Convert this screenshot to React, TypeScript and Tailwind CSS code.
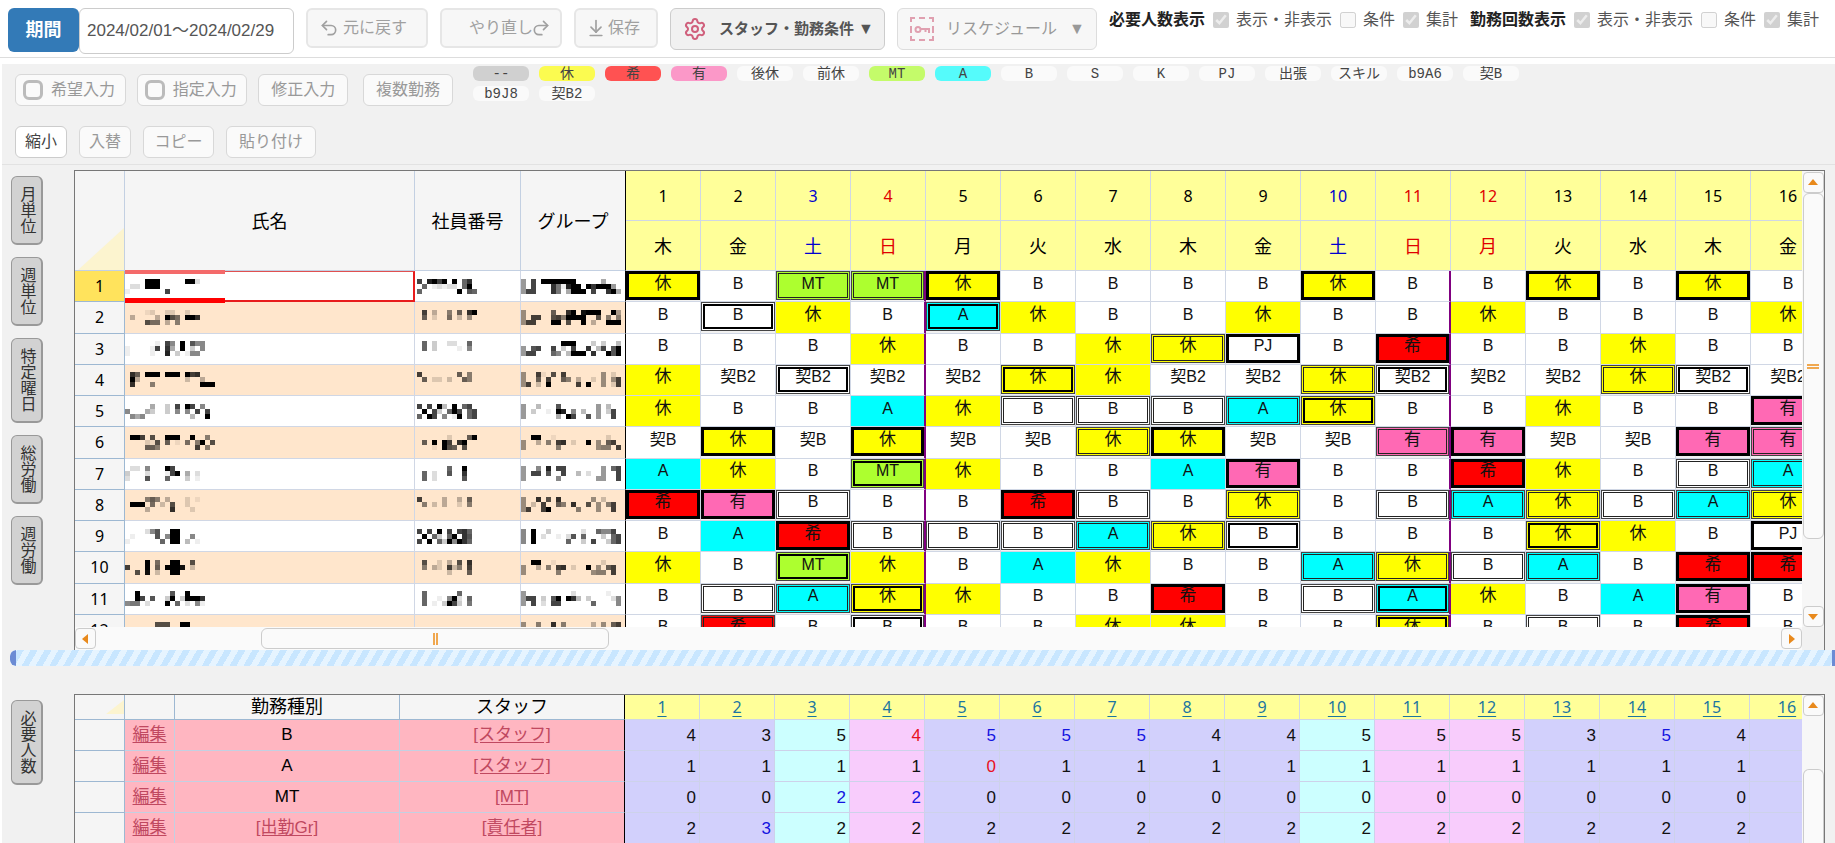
import React from 'react';
import clsx from 'clsx';
import { ArrowDownToLine, Redo2, Settings, Undo2 } from 'lucide-react';

const uiFont = "font-['Liberation_Sans','Noto_Sans_CJK_JP',sans-serif]";
const gridFont = "font-['Noto_Sans','Noto_Sans_CJK_JP',sans-serif]";
const chipFont = "font-['Liberation_Mono','Noto_Sans_CJK_JP',monospace]";

const weekdays = ['木', '金', '土', '日', '月', '火', '水', '木', '金', '土', '日', '月', '火', '水', '木', '金'];
const saturdays = [3, 10];
const holidays = [4, 11, 12];
const days = weekdays.map((weekday, i) => ({ day: i + 1, weekday }));

const chips = [
  { label: '--', bg: 'bg-[#d0d0d0]' },
  { label: '休', bg: 'bg-[#fbfb50]' },
  { label: '希', bg: 'bg-[#ff5252]' },
  { label: '有', bg: 'bg-[#fb98c8]' },
  { label: '後休', bg: 'bg-[#fafafa]' },
  { label: '前休', bg: 'bg-[#fafafa]' },
  { label: 'MT', bg: 'bg-[#c4fb6a]' },
  { label: 'A', bg: 'bg-[#55fbfb]' },
  { label: 'B', bg: 'bg-[#fafafa]' },
  { label: 'S', bg: 'bg-[#fafafa]' },
  { label: 'K', bg: 'bg-[#fafafa]' },
  { label: 'PJ', bg: 'bg-[#fafafa]' },
  { label: '出張', bg: 'bg-[#fafafa]' },
  { label: 'スキル', bg: 'bg-[#fafafa]' },
  { label: 'b9A6', bg: 'bg-[#fafafa]' },
  { label: '契B', bg: 'bg-[#fafafa]' },
  { label: 'b9J8', bg: 'bg-[#fafafa]' },
  { label: '契B2', bg: 'bg-[#fafafa]' },
];

const shiftColors: Record<string, string> = {
  休: 'bg-[#ffff00]',
  希: 'bg-[#ff0000]',
  有: 'bg-[#ff69b4]',
  MT: 'bg-[#adff2f]',
  A: 'bg-[#00ffff]',
};

// Suffix: "!" thick frame, "=" double frame, "#" double frame with a heavy inner line
const shifts = [
  '休! B MT= MT= 休! B B B B 休! B B 休! B 休! B',
  'B B# 休 B A# 休 B B 休 B B 休 B B B 休',
  'B B B 休 B B 休 休= PJ! B 希! B B 休 B B',
  '休 契B2 契B2# 契B2 契B2 休# 休 契B2 契B2 休= 契B2# 契B2 契B2 休= 契B2# 契B2',
  '休 B B A 休 B= B= B= A= 休# B B 休 B B 有!',
  '契B 休! 契B 休! 契B 契B 休= 休! 契B 契B 有= 有! 契B 契B 有! 有=',
  'A 休 B MT# 休 B B A 有! B B 希! 休 B B= A=',
  '希! 有! B= B B 希! B= B 休= B B= A= 休= B= A= 休=',
  'B A 希! B= B= B= A= 休= B# B B B 休# 休 B PJ!',
  '休 B MT# 休 B A 休 B B A= 休= B= A= B 希! 希!',
  'B B= A= 休# 休 B B 希! B B= A# 休 B A 有! B',
  'B 希= B B# B B 休 休 B B 休# B B= B 希! B',
].map((row) => row.split(' '));

// Masked personal data: one hex digit per tile, 0 = darkest
const masks = [
  {
    name: ['....000.....00d', '.dd.000', 'e.......4'],
    id: ['4.2040.0.63', '.6.ededd.60', '6.......0.56'],
    group: ['9.4.0000000.....a...0', '9.4...37e200.030009.4', '944...37.a000.4..30a4'],
  },
  {
    name: ['....ed..dd..d', '.b....b.057.003', '....577.b.8'],
    id: ['.4.b..8.6.30', '.6.d..7.c.9', ''],
    group: ['9.....6..30.1000..0a4', '9.44..5480000..5.8.84', '944...00.5..0.b..0004'],
  },
  {
    name: ['......e.48.0.588', 'e....e4.3a.0.c.8', 'e....e..2.c.e88'],
    id: ['.6.c..dd..6', '.6.c....e.8', ''],
    group: ['........000...c.c..b4', '9.54..4.c.4..3.b4.504', '944...68.b000.3..0504'],
  },
  {
    name: ['.36.000.000.043', '.0b.........c..b', '.3...8.........000'],
    id: ['4.......6.8', '.6.dd.c..68', ''],
    group: ['9..4e.5.4.......9.d', '9..6.4..68.b..d.9.94', '94.c.0.....4.0..9.d4'],
  },
  {
    name: ['.....a..c.4.04.8', '8...ac..c.8.8.4.4', '.8a8.........b..0'],
    id: ['4.4.0b.0.64', '.0.4c.604.64', '6.04.8.e0.64'],
    group: ['9..b...5.......9.b', '9.c..e.02.8.b..9.c4', '9......a.04..5.9..4'],
  },
  {
    name: ['.004.5..000..0..8', '....de5.6.e.7.80.5', '....668.......4.8'],
    id: ['......d...60', '.6.0.04.30', '...e.056.5'],
    group: ['..00..e..........d', '9..b.8.43.d..0.9.64', '9......8.......988.4'],
  },
  {
    name: ['.dd.8...04', 'c...d...e40.a.d', 'd...5...6...c.e'],
    id: ['......6..0', '.6.d..5..3', '.6.d.....5'],
    group: ['9..8.2.44.......9.64', '9.44.5..4..b.d..9..4', '9......8.......99..4'],
  },
  {
    name: ['....868.b...d.e', '.000.7.c.5..d', '....b....3...d'],
    id: ['4....b..b.6', '.8.c.b..d.8', ''],
    group: ['9..3.5.3......9.c', '9.c.4..68.3..5.9.84', '94..40.....8...9..4'],
  },
  {
    name: ['....d85..00', '.e....5.800..8', 'e......6.00.b.e'],
    id: ['4.4.0.4.436', '.0.6c.60.35', '4.0.6c08036'],
    group: ['8.0..c......d..6884', '8.0.d..e.d5.6...c.64', '8.0......6..c.4..c64'],
  },
  {
    name: ['....0.7..00..5', '4...0.6.0001.c', '..5.1.c..00'],
    id: ['.5..d.b.5.3', '.8.bd.4c8.4', '......c...6'],
    group: ['..00..e.........d', '9..b.8.43.d..0.9.64', '9......8......988.4'],
  },
  {
    name: ['..0......5..0', '..04.5..c0.c0003', '877.d...0.6.d.8e'],
    id: ['.6......6', '.6..e.80d.6', '.6.e.c04c.7'],
    group: ['9.........d......e..4', '944.c.50.03b.c....d84', '9.4.d.44......6....84'],
  },
  { name: ['......555..00', '......555..00'], id: [], group: ['9..8..3.8.....b.9.64', '9..8.........b..9..4'] },
];

type Tone = '' | 'r' | 'b';
const demand: { kind: string; kindLink?: boolean; staff: string; counts: string[] }[] = [
  { kind: 'B', staff: '[スタッフ]', counts: '4 3 5 4r 5b 5b 5b 4 4 5 5 5 3 5b 4'.split(' ') },
  { kind: 'A', staff: '[スタッフ]', counts: '1 1 1 1 0r 1 1 1 1 1 1 1 1 1 1'.split(' ') },
  { kind: 'MT', staff: '[MT]', counts: '0 0 2b 2b 0 0 0 0 0 0 0 0 0 0 0'.split(' ') },
  { kind: '[出勤Gr]', kindLink: true, staff: '[責任者]', counts: '2 3b 2 2 2 2 2 2 2 2 2 2 2 2 2'.split(' ') },
];

function dayColor(day: number) {
  if (saturdays.includes(day)) return 'text-[#0000d0]';
  if (holidays.includes(day)) return 'text-[#e00000]';
  return 'text-black';
}

function Mosaic({ rows, cols }: { rows: string[]; cols: number }) {
  return (
    <svg width={cols * 5} height={15} shapeRendering="crispEdges" aria-hidden="true" className="block">
      {rows.flatMap((row, y) =>
        row.split('').map((c, x) =>
          c === '.' ? null : (
            <rect key={`${x}-${y}`} x={x * 5} y={y * 5} width={5} height={5} fillOpacity={(15 - parseInt(c, 16)) / 15} />
          )
        )
      )}
    </svg>
  );
}

function KeyFrameIcon() {
  return (
    <svg width="24" height="24" viewBox="0 0 24 24" fill="none" stroke="#e0a0b0" strokeWidth="2" aria-hidden="true">
      <path d="M1 5V1h4M9 1h6M19 1h4v4M23 9v7M23 19v4h-4M15 23H9M5 23H1v-4M1 16V9" />
      <circle cx="8" cy="12.500" r="2.500" />
      <path d="M10.500 12H19v4M15.500 12v3" />
    </svg>
  );
}

function ToolButton({ className, active, children }: { className?: string; active?: boolean; children: React.ReactNode }) {
  return (
    <button
      type="button"
      className={clsx(
        'h-8 rounded-md border text-base leading-7',
        active ? 'border-[#ccc] bg-white text-[#444]' : 'border-[#d8d8d8] bg-[#fafafa] text-[#999]',
        className
      )}
    >
      {children}
    </button>
  );
}

function ToggleInput({ label }: { label: string }) {
  return (
    <label className="flex h-8 w-[111px] items-center gap-2 rounded-md border border-[#d8d8d8] bg-[#fafafa] pl-[7px] text-base leading-7 text-[#999]">
      <input type="checkbox" className="size-5 shrink-0 appearance-none rounded-md border-[3px] border-[#bbb] bg-[#fafafa]" />
      {label}
    </label>
  );
}

function DisplayOptions({ title }: { title: string }) {
  const options = [
    { label: '表示・非表示', checked: true },
    { label: '条件', checked: false },
    { label: '集計', checked: true },
  ];
  return (
    <fieldset className="flex items-center gap-2">
      <legend className="float-left text-base leading-6 font-bold text-[#222]">{title}</legend>
      {options.map((o) => (
        <label key={o.label} className="flex items-center gap-[7px] text-base leading-6 whitespace-nowrap text-[#555]">
          <input type="checkbox" disabled defaultChecked={o.checked} className="size-4" />
          {o.label}
        </label>
      ))}
    </fieldset>
  );
}

function SideTab({ children }: { children: string }) {
  return (
    <button
      type="button"
      className="flex w-8 items-center justify-center rounded-md border border-r-2 border-b-2 border-[#999] bg-[#d2d2d2] pt-[9px] pb-[9px] text-base leading-none text-[#333] [writing-mode:vertical-rl]"
    >
      {children}
    </button>
  );
}

function ArrowButton({ dir, className }: { dir: 'up' | 'down' | 'left' | 'right'; className?: string }) {
  const points = {
    up: '0,7 10,7 5,1',
    down: '0,2 10,2 5,8',
    left: '7,0 7,10 1,5',
    right: '2,0 2,10 8,5',
  }[dir];
  return (
    <button
      type="button"
      aria-label={dir}
      className={clsx('flex size-[21px] shrink-0 items-center justify-center rounded-sm border border-[#ccc] bg-[#fafafa]', className)}
    >
      <svg width="10" height="10" fill="#e8891c">
        <polygon points={points} />
      </svg>
    </button>
  );
}

function Corner({ height }: { height: number }) {
  return (
    <svg width={height + 4} height={height} className="ml-auto block" preserveAspectRatio="none" viewBox="0 0 10 10">
      <polygon points="0,10 10,0 10,10" fill="#fcf4cf" />
    </svg>
  );
}

function ShiftCell({ value, weekEnd }: { value: string; weekEnd: boolean }) {
  const code = value.replace(/[!=#]/, '');
  const frame = value.slice(code.length);
  const bg = shiftColors[code] ?? 'bg-white';
  return (
    <td
      className={clsx(
        'border-b border-b-[#d0d7e5] p-0 align-top leading-none',
        weekEnd ? 'border-r-2 border-r-[#800080]' : 'border-r border-r-[#d0d7e5]',
        !frame && bg,
        uiFont
      )}
    >
      <div
        className={clsx(
          'h-[29px]',
          frame === '!' && 'border-[3px] border-black',
          (frame === '=' || frame === '#') && 'border border-[#444] p-px',
          frame && bg
        )}
      >
        <div
          className={clsx(
            'flex h-full items-center justify-center',
            frame === '=' && 'border border-[#222]',
            frame === '#' && 'border-2 border-black'
          )}
        >
          <span className={clsx('-mt-1 leading-5 text-[#111]', /[A-Z]/.test(code) ? 'text-base' : 'text-[17px]')}>{code}</span>
        </div>
      </div>
    </td>
  );
}

function ShiftTable() {
  const head = 'border-r border-b border-[#c3d0e2] bg-[#f5f5f5] p-0 font-normal';
  return (
    <table className={clsx('h-[475px] w-[1751px] table-fixed border-separate border-spacing-0 text-center', gridFont)}>
      <colgroup>
        <col className="w-[50px]" />
        <col className="w-[290px]" />
        <col className="w-[106px]" />
        <col className="w-[105px]" />
        {days.map((d) => (
          <col key={d.day} className="w-[75px]" />
        ))}
      </colgroup>
      <thead>
        <tr className="h-[50px]">
          <th rowSpan={2} className={clsx(head, 'align-bottom')}>
            <Corner height={42} />
          </th>
          <th rowSpan={2} className={clsx(head, 'text-lg')}>氏名</th>
          <th rowSpan={2} className={clsx(head, 'text-lg')}>社員番号</th>
          <th rowSpan={2} className={clsx(head, 'border-r-black text-lg')}>グループ</th>
          {days.map((d) => (
            <th key={d.day} className={clsx('border-r border-b border-[#d0d7e5] bg-[#ffff99] p-0 text-base font-normal', dayColor(d.day))}>
              {d.day}
            </th>
          ))}
        </tr>
        <tr className="h-[50px]">
          {days.map((d) => (
            <th key={d.day} className={clsx('border-r border-b border-[#d0d7e5] bg-[#ffff99] p-0 text-lg font-normal', dayColor(d.day))}>
              {d.weekday}
            </th>
          ))}
        </tr>
      </thead>
      <tbody>
        {shifts.map((row, i) => {
          const cell = clsx('border-r border-b border-[#d0d7e5] p-0', i % 2 ? 'bg-[#ffe6cc]' : 'bg-white');
          return (
            <tr key={i}>
              <th
                className={clsx(
                  'border-r border-b border-[#9db8d2] p-0 text-base leading-5 font-normal text-black',
                  i === 0 ? 'bg-[#ffe35c]' : 'bg-[#f5f5f5]'
                )}
              >
                {i + 1}
              </th>
              <td className={clsx(cell, 'relative')}>
                <Mosaic rows={masks[i].name} cols={18} />
                {i === 0 && (
                  <>
                    <span className="absolute inset-0 -right-px -bottom-px z-10 border-t border-r-2 border-b-2 border-t-[#e05050] border-r-[#e81c1c] border-b-[#e81c1c]" />
                    <span className="absolute -top-px left-0 z-10 h-1 w-[100px] bg-[#f46a6a]" />
                    <span className="absolute -bottom-0.5 left-0 z-10 h-[5px] w-[100px] bg-[#ff0000]" />
                  </>
                )}
              </td>
              <td className={clsx(cell, 'pl-0.5')}>
                <Mosaic rows={masks[i].id} cols={12} />
              </td>
              <td className={clsx(cell, 'border-r-black')}>
                <Mosaic rows={masks[i].group} cols={20} />
              </td>
              {row.map((value, d) => (
                <ShiftCell key={d} value={value} weekEnd={d === 3 || d === 10} />
              ))}
            </tr>
          );
        })}
      </tbody>
    </table>
  );
}

function DemandTable() {
  const head = 'h-[25px] border-r border-b border-[#9db8d2] bg-[#f5f5f5] p-0 align-middle text-lg leading-5 font-normal';
  const cell = 'border-r border-b border-[#c3d0e2] bg-[#ffb6c1] p-0 text-center';
  const link = 'text-[#c04860] underline underline-offset-2';
  const tones: Record<Tone, string> = { '': 'text-[#111]', r: 'text-[#e81123]', b: 'text-[#1414e0]' };

  return (
    <table className={clsx('w-[1825px] table-fixed border-separate border-spacing-0 text-[17px]', uiFont)}>
      <colgroup>
        <col className="w-[50px]" />
        <col className="w-[50px]" />
        <col className="w-[225px]" />
        <col className="w-[225px]" />
        {days.map((d) => (
          <col key={d.day} className="w-[75px]" />
        ))}
        <col className="w-[75px]" />
      </colgroup>
      <thead>
        <tr>
          <th className={clsx(head, 'text-right')}>
            <Corner height={14} />
          </th>
          <th className={head} />
          <th className={head}>勤務種別</th>
          <th className={clsx(head, 'border-r-black')}>スタッフ</th>
          {days.map((d) => (
            <th
              key={d.day}
              className={clsx('border-r border-b border-[#d0d7e5] bg-[#ffff99] p-0 text-base leading-5 font-normal', gridFont)}
            >
              <a href={`#day-${d.day}`} className="text-[#1b75a0] underline underline-offset-3">
                {d.day}
              </a>
            </th>
          ))}
          <th className="bg-[#ffff99]" />
        </tr>
      </thead>
      <tbody>
        {demand.map((row, i) => (
          <tr key={i} className="h-[31px]">
            <th className="border-r border-b border-[#9db8d2] bg-[#f5f5f5] p-0" />
            <td className={cell}>
              <a href="#edit" className={link}>編集</a>
            </td>
            <td className={cell}>{row.kindLink ? <a href="#kind" className={link}>{row.kind}</a> : row.kind}</td>
            <td className={clsx(cell, 'border-r-black')}>
              <a href="#staff" className={link}>{row.staff}</a>
            </td>
            {days.map(({ day }) => {
              const value = row.counts[day - 1] ?? '';
              return (
                <td
                  key={day}
                  className={clsx(
                    'border-r border-b border-[#cdd2ea] pt-0.5 pr-[3px] pb-0 text-right',
                    saturdays.includes(day) ? 'bg-[#ccffff]' : holidays.includes(day) ? 'bg-[#f8ccfc]' : 'bg-[#d2d0fc]',
                    tones[value.replace(/\d/g, '') as Tone]
                  )}
                >
                  {value.replace(/\D/g, '')}
                </td>
              );
            })}
            <td className="bg-[#d2d0fc]" />
          </tr>
        ))}
      </tbody>
    </table>
  );
}

export default function App() {
  return (
    <div className={clsx('flex h-screen flex-col overflow-hidden bg-white', uiFont)}>
      {/* Header */}
      <header className="flex h-[58px] shrink-0 items-start gap-3 border-b border-[#ddd] pt-2 pl-2">
        <div className="flex">
          <label htmlFor="period" className="flex h-11 w-[71px] items-center justify-center rounded-md bg-[#337ab7] text-lg leading-none font-bold text-white">
            期間
          </label>
          <input
            id="period"
            type="text"
            defaultValue="2024/02/01～2024/02/29"
            className="h-[46px] w-[215px] rounded-md border border-[#ccc] bg-white px-[7px] pb-1.5 text-[17px] text-[#555]"
          />
        </div>
        <button type="button" className="flex h-10 w-[122px] items-center gap-1 rounded-md border-2 border-[#e6e6e6] bg-[#f7f7f7] pl-[11px] text-base text-[#a0a0a0]">
          <Undo2 className="size-5" />
          元に戻す
        </button>
        <button type="button" className="flex h-10 w-[122px] items-center rounded-md border-2 border-[#e6e6e6] bg-[#f7f7f7] pl-[27px] text-base text-[#a0a0a0]">
          やり直し
          <Redo2 className="-ml-0.5 size-5" />
        </button>
        <button type="button" className="flex h-10 w-[84px] items-center gap-0.5 rounded-md border-2 border-[#e6e6e6] bg-[#f7f7f7] pl-2.5 text-base text-[#a0a0a0]">
          <ArrowDownToLine className="size-5" />
          保存
        </button>
        <button type="button" className="flex h-[42px] w-[215px] items-center rounded-md border border-[#ccc] bg-[#f1f1f1] pl-3 text-[15px] font-bold text-[#555]">
          <Settings className="size-6 text-[#d0607c]" />
          <span className="ml-3">スタッフ・勤務条件</span>
          <span className="ml-1 text-base">▼</span>
        </button>
        <button type="button" className="flex h-[42px] w-[200px] items-center rounded-md border border-[#ddd] bg-[#f7f7f7] pl-3 text-base text-[#999]">
          <KeyFrameIcon />
          <span className="ml-3">リスケジュール</span>
          <span className="ml-3 text-base">▼</span>
        </button>
        <div className="flex gap-3 whitespace-nowrap">
          <DisplayOptions title="必要人数表示" />
          <DisplayOptions title="勤務回数表示" />
        </div>
      </header>

      <div className="mt-1.5 ml-0.5 flex min-h-0 flex-1 flex-col bg-[#f1f1f1]">
        {/* Toolbar */}
        <div className="flex h-[101px] shrink-0 gap-5 border-b border-[#e2e2e2] pl-[13px]">
          <div className="flex w-[438px] shrink-0 flex-col gap-5 pt-2.5">
            <div className="flex gap-[11px]">
              <ToggleInput label="希望入力" />
              <ToggleInput label="指定入力" />
              <ToolButton className="w-[90px]">修正入力</ToolButton>
              <ToolButton className="ml-1 w-[90px]">複数勤務</ToolButton>
            </div>
            <div className="flex gap-3">
              <ToolButton active className="w-[52px]">縮小</ToolButton>
              <ToolButton className="w-[52px]">入替</ToolButton>
              <ToolButton className="w-[71px]">コピー</ToolButton>
              <ToolButton className="w-[90px]">貼り付け</ToolButton>
            </div>
          </div>
          <div className="flex max-w-[1060px] flex-wrap content-start gap-x-2.5 gap-y-[5px] pt-0.5">
            {chips.map((chip) => (
              <button
                key={chip.label}
                type="button"
                className={clsx('flex h-[15px] w-14 items-center justify-center rounded-md text-sm leading-none text-[#444]', chipFont, chip.bg)}
              >
                {chip.label}
              </button>
            ))}
          </div>
        </div>

        {/* Shift grid */}
        <section className="mt-[5px] flex h-[480px] shrink-0 pr-2.5">
          <nav className="flex w-[72px] shrink-0 flex-col items-start gap-3 pt-1.5 pl-[9px]">
            <SideTab>月単位</SideTab>
            <SideTab>週単位</SideTab>
            <SideTab>特定曜日</SideTab>
            <SideTab>総労働</SideTab>
            <SideTab>週労働</SideTab>
          </nav>
          <div className="flex min-w-0 flex-1 border border-b-0 border-[#777]">
            <div className="flex min-w-0 flex-1 flex-col">
              <div className="h-[456px] overflow-hidden">
                <ShiftTable />
              </div>
              <div className="flex flex-1 items-start bg-[#fafafa] pt-px">
                <ArrowButton dir="left" />
                <div className="ml-[165px] flex h-[21px] w-[348px] items-center justify-center gap-px rounded-md border border-[#ccc] bg-[#fafafa]">
                  <span className="h-3 w-0.5 bg-[#f0a850]" />
                  <span className="h-3 w-0.5 bg-[#f0a850]" />
                </div>
                <ArrowButton dir="right" className="ml-auto" />
              </div>
            </div>
            <div className="mb-[23px] flex w-[22px] flex-col items-center bg-[#f7f7f7] pt-px">
              <ArrowButton dir="up" />
              <div className="flex h-[346px] w-[21px] flex-col items-center justify-center gap-px rounded-md border border-[#ccc] bg-[#fafafa]">
                <span className="h-0.5 w-3 bg-[#f0a850]" />
                <span className="h-0.5 w-3 bg-[#f0a850]" />
              </div>
              <ArrowButton dir="down" className="mt-auto" />
            </div>
          </div>
        </section>

        {/* Splitter */}
        <div className="ml-2 flex h-4 shrink-0 overflow-hidden rounded-l-md bg-[repeating-linear-gradient(120deg,#e6f4ff_0px,#e6f4ff_6px,#c8e6ff_6px,#c8e6ff_12px)]">
          <span className="w-1.5 rounded-l-md bg-[#6b8bd4]" />
          <span className="ml-auto w-[3px] bg-[#6b8bd4]" />
        </div>

        {/* Required headcount */}
        <section className="mt-7 flex min-h-0 flex-1 pr-2.5">
          <nav className="w-[72px] shrink-0 pt-1.5 pl-[9px]">
            <SideTab>必要人数</SideTab>
          </nav>
          <div className="flex min-w-0 flex-1 border border-b-0 border-[#777]">
            <div className="min-w-0 flex-1 overflow-hidden">
              <DemandTable />
            </div>
            <div className="flex w-[22px] flex-col items-center bg-[#f7f7f7]">
              <ArrowButton dir="up" />
              <div className="mt-[53px] w-[21px] flex-1 rounded-t-md border border-b-0 border-[#ccc] bg-[#fafafa]" />
            </div>
          </div>
        </section>
      </div>
    </div>
  );
}
